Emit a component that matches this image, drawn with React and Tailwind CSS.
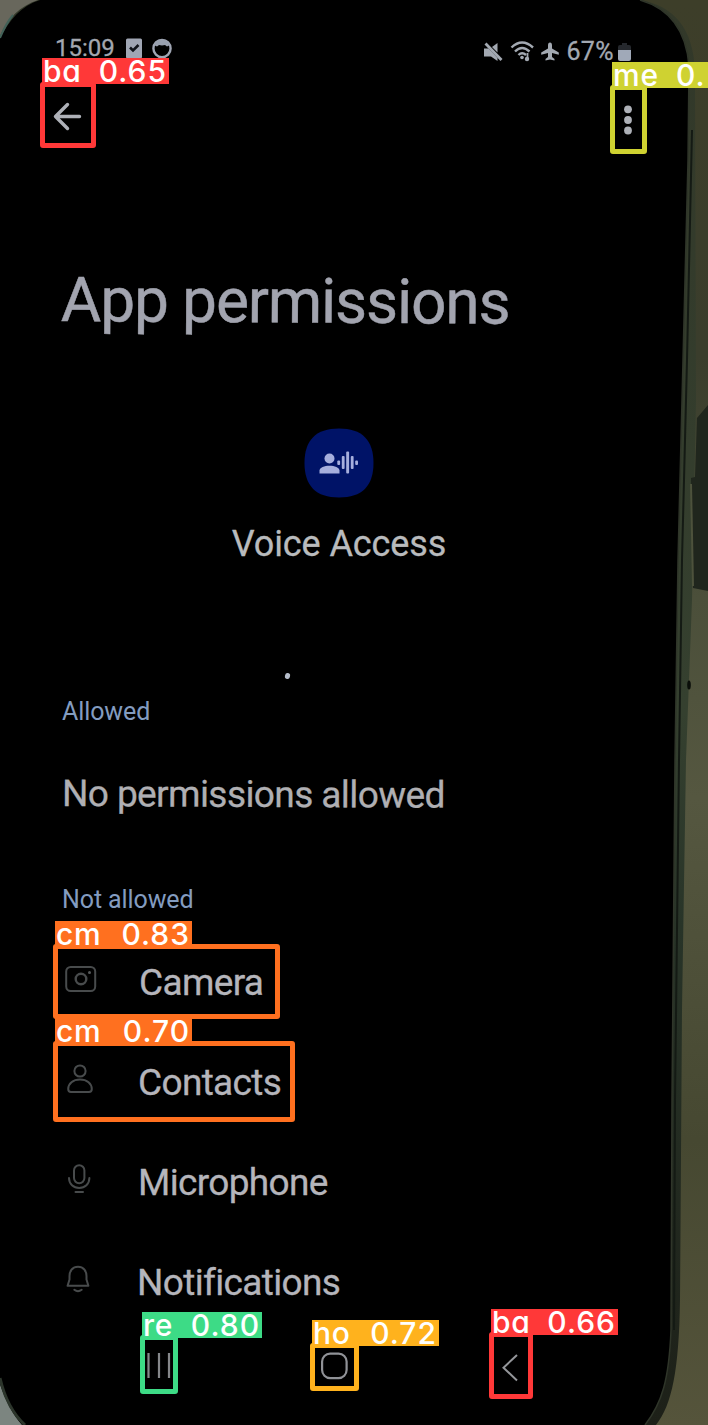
import React from "react";

function PhoneBody() {
  return (
    <svg className="absolute inset-0" width="708" height="1425" viewBox="0 0 708 1425" aria-hidden="true">
      <defs>
        <linearGradient id="desk" x1="0" y1="0" x2="0" y2="1">
          <stop offset="0" stopColor="#3d3e29" />
          <stop offset="0.25" stopColor="#3a3d2c" />
          <stop offset="0.42" stopColor="#4b4f3a" />
          <stop offset="0.56" stopColor="#555740" />
          <stop offset="0.8" stopColor="#464831" />
          <stop offset="1" stopColor="#55543b" />
        </linearGradient>
        <linearGradient id="side" x1="0" y1="0" x2="0" y2="1">
          <stop offset="0" stopColor="#323829" />
          <stop offset="0.5" stopColor="#35402f" />
          <stop offset="0.65" stopColor="#283428" />
          <stop offset="1" stopColor="#1d2018" />
        </linearGradient>
      </defs>
      <rect width="708" height="1425" fill="url(#desk)" />
      <path d="M0 0H60V60H0Z" fill="#68675c" />
      <path d="M0 1340H40V1425H0Z" fill="#7c8580" />
      <path
        d="M0 36C8 18 20 6 38 0H640C674 6 693 28 695 70L696 400L692 600L686 760L682 1010L680 1300C679 1370 672 1405 656 1425H26C14 1414 5 1400 0 1380Z"
        fill="url(#side)"
      />
      <path d="M708 405L697 418L695 477L691 478L693 588L708 591Z" fill="#20261d" />
      <path d="M691 484L693 586" stroke="#4d523c" strokeWidth="2" />
      <path
        d="M-2 42C8 22 20 6 40 0H640C668 8 686 28 689 66L688 160L683 360L678 560L675 760L672 1100L671 1330C669 1380 662 1403 645 1425H22C12 1414 4 1398 -2 1378Z"
        fill="#000"
      />
      <path
        d="M640 0C668 8 686 28 689 66L688 160L683 360L678 560L675 760L672 1100L671 1330C669 1380 662 1403 645 1425"
        fill="none"
        stroke="#2f3529"
        strokeWidth="1.5"
      />
      <path d="M692 130L687 360L682 560L679 760L675 1100L674 1330" fill="none" stroke="#141a14" strokeWidth="2" />
      <path d="M0 1378C5 1400 13 1414 25 1425" fill="none" stroke="#2c352b" strokeWidth="3" />
      <path d="M0 38C4 28 8 21 13 15" fill="none" stroke="#426158" strokeWidth="2" />
      <ellipse cx="689" cy="685" rx="1.8" ry="4.5" fill="#0a0e09" />
    </svg>
  );
}

const detections = [
  { name: "ba", score: "0.65", label: "left-[42px] top-[58px] w-[127px] bg-[#ff3838]", box: "left-[40px] top-[82px] w-[56px] h-[66px] border-[#ff3838]" },
  { name: "me", score: "0.", label: "left-[612px] top-[62px] w-[96px] bg-[#cfd231]", box: "left-[610px] top-[85px] w-[37px] h-[69px] border-[#cfd231]" },
  { name: "cm", score: "0.83", label: "left-[55px] top-[921px] w-[137px] bg-[#ff701f]", box: "left-[53px] top-[944px] w-[227px] h-[75px] border-[#ff701f]" },
  { name: "cm", score: "0.70", label: "left-[55px] top-[1018px] w-[137px] bg-[#ff701f]", box: "left-[53px] top-[1041px] w-[242px] h-[81px] border-[#ff701f]" },
  { name: "re", score: "0.80", label: "left-[142px] top-[1312px] w-[120px] bg-[#3ddb86]", box: "left-[140px] top-[1335px] w-[38px] h-[59px] border-[#3ddb86]" },
  { name: "ho", score: "0.72", label: "left-[312px] top-[1320px] w-[127px] bg-[#ffb21d]", box: "left-[310px] top-[1343px] w-[49px] h-[48px] border-[#ffb21d]" },
  { name: "ba", score: "0.66", label: "left-[491px] top-[1309px] w-[127px] bg-[#ff3838]", box: "left-[489px] top-[1332px] w-[44px] h-[67px] border-[#ff3838]" },
];

function Detection({ name, score, label, box }) {
  const cut = score === "0.";
  return (
    <>
      <div className={`absolute rounded-[3px] border-[5px] ${box}`} />
      <div
        className={`absolute flex h-[26px] items-center whitespace-nowrap pr-[2px] pl-px font-[Inter,sans-serif] text-[30px] leading-[26px] font-medium text-white [font-feature-settings:'cv11'] ${cut ? "gap-[17px]" : "justify-between"} ${label}`}
      >
        <span className="tracking-[0.8px]">{name}</span>
        <span className="tracking-[1px]">{score}</span>
      </div>
    </>
  );
}

function CameraIcon() {
  return (
    <svg width="34" height="34" viewBox="0 0 34 34" fill="none" stroke="#484b4c" strokeWidth="2">
      <rect x="2.2" y="5" width="29" height="24" rx="4.5" />
      <circle cx="17" cy="17" r="5.3" strokeWidth="2.4" />
      <circle cx="25.5" cy="10.5" r="1.5" fill="#555859" stroke="none" />
    </svg>
  );
}

function ContactIcon() {
  return (
    <svg width="34" height="34" viewBox="0 0 34 34" fill="none" stroke="#484b4c" strokeWidth="2">
      <circle cx="17" cy="9" r="5.6" />
      <path d="M5.2 27C5.2 21.5 10 17.5 17 17.5S28.8 21.5 28.8 27Q28.8 30 26 30H8Q5.2 30 5.2 27Z" />
    </svg>
  );
}

function MicIcon() {
  return (
    <svg width="34" height="34" viewBox="0 0 34 34" fill="none" stroke="#484b4c" strokeWidth="2" strokeLinecap="round">
      <rect x="12" y="3.2" width="10.4" height="18" rx="5.2" />
      <path d="M7 16C7 22 11.5 26 17.2 26S27.4 22 27.4 16M13.5 30H21" />
    </svg>
  );
}

function BellIcon() {
  return (
    <svg width="34" height="34" viewBox="0 0 34 34" fill="none" stroke="#484b4c" strokeWidth="2" strokeLinecap="round" strokeLinejoin="round">
      <path d="M17 4.8C11.5 4.8 8.5 9 8.5 14V17.5L6.6 23.8H27.4L25.5 17.5V14C25.5 9 22.5 4.8 17 4.8Z" />
      <path d="M13.3 27.8Q17 30.5 20.7 27.8" />
    </svg>
  );
}

function PermissionRow({ icon, inset, gap, children }) {
  return (
    <li className={`flex h-[100px] items-center ${inset}`}>
      <span className="-mt-[8px] shrink-0">{icon}</span>
      <span className={`whitespace-nowrap text-[37px] leading-[40px] tracking-[-0.65px] text-[#b5b5bb] [-webkit-text-stroke:0.3px] ${gap}`}>{children}</span>
    </li>
  );
}

export default function App() {
  return (
    <div className="relative h-[1425px] w-[708px] overflow-hidden bg-black font-[Roboto,sans-serif]">
      <PhoneBody />
      <main className="relative flex h-full flex-col">
        <header className="flex h-[72px] items-start justify-between pl-[55px] pr-[76px]">
          <div className="flex items-center pt-9 text-[#a3a7af]">
            <span className="text-[24px] leading-[24px] [-webkit-text-stroke:0.3px]">15:09</span>
            <svg className="ml-[10px]" width="18" height="22" viewBox="0 0 18 22">
              <rect x="1" y="1.5" width="16" height="20" rx="1.5" fill="#a0a6b4" />
              <path d="M5 10.5L8 13.5L13.5 8" fill="none" stroke="#11141b" strokeWidth="2.6" />
            </svg>
            <svg className="ml-[8px]" width="22" height="22" viewBox="0 0 22 22">
              <circle cx="11" cy="11.5" r="8.6" fill="none" stroke="#a0a6b4" strokeWidth="2.4" />
              <path d="M3 8Q5 2.5 11 2.5T19 8L16 9.5L14 8L11 8.5L8 8L6 9.5Z" fill="#98a0ae" />
            </svg>
          </div>
          <div className="flex items-center pt-[39px] text-[#a3a9b2]">
            <svg width="22" height="22" viewBox="0 0 22 22" fill="currentColor">
              <path d="M1 7.5H5.5L9 11L14.5 17V20L8 15.5H1Z" />
              <path d="M9 6L14.5 2V11.5Z" />
              <path d="M2.5 2.5L18.5 19" stroke="currentColor" strokeWidth="2.8" />
            </svg>
            <svg className="ml-[5px]" width="26" height="23" viewBox="0 0 26 23" fill="none" stroke="currentColor" strokeWidth="2.4">
              <path d="M1.5 7.5Q12 -2.5 23 7.5M5 11.5Q12 4.5 19.5 11.5M8.5 15Q12 11.5 16 15" />
              <circle cx="12" cy="17.5" r="1.8" fill="currentColor" stroke="none" />
              <path d="M17.5 13V19" strokeWidth="1.8" />
              <circle cx="17" cy="19" r="2.2" fill="currentColor" stroke="none" />
            </svg>
            <svg className="ml-[4px]" width="20" height="21" viewBox="0 0 20 21" fill="currentColor">
              <path d="M10 1.5C11.4 1.5 12 2.8 12 4.5V7.5L18.8 11.5V13.8L12 12V16L14.5 18V19.6L10 18.6L5.5 19.6V18L8 16V12L1.2 13.8V11.5L8 7.5V4.5C8 2.8 8.6 1.5 10 1.5Z" />
            </svg>
            <span className="ml-[6px] text-[25px] leading-[25px] tracking-[0.4px] [-webkit-text-stroke:0.3px]">67%</span>
            <svg className="ml-[3px]" width="15" height="20" viewBox="0 0 15 20">
              <path d="M1 8V5Q1 3 3 3H5V1H10V3H12Q14 3 14 5V8Z" fill="#25282d" />
              <path d="M1 8H14V17Q14 19 12 19H3Q1 19 1 17Z" fill="#a0a9b8" />
            </svg>
          </div>
        </header>

        <div className="flex h-[90px] items-center justify-between pl-[53px] pr-[74px]">
          <svg width="30" height="30" viewBox="0 0 30 30" fill="none" stroke="#aeb1b8" strokeWidth="3.4" strokeLinecap="round" strokeLinejoin="round">
            <path d="M26.5 14.5H2.5M14.5 2.5L2.5 14.5L14.5 26.5" />
          </svg>
          <svg className="mt-[5px]" width="12" height="34" viewBox="0 0 12 34" fill="#aeb1b8">
            <circle cx="6" cy="6.3" r="3.9" />
            <circle cx="6" cy="17" r="3.9" />
            <circle cx="6" cy="27.5" r="3.9" />
          </svg>
        </div>

        <div className="flex h-[266px] items-center pt-[9px] pl-[61px]">
          <h1 className="origin-left rotate-[0.35deg] whitespace-nowrap text-[62px] leading-[70px] tracking-[-1.05px] text-[#a2a4af] [-webkit-text-stroke:0.5px]">App permissions</h1>
        </div>

        <section className="flex h-[250px] w-[678px] flex-col items-center">
          <svg className="shrink-0" width="70" height="70" viewBox="0 0 70 70">
            <path d="M35 .5C58 .5 69.5 12 69.5 35S58 69.5 35 69.5S.5 58 .5 35S12 .5 35 .5Z" fill="#001367" />
            <g fill="#a6afdd">
              <circle cx="25.5" cy="30.5" r="5" />
              <path d="M15.5 45.5V42.5C15.5 36 35.5 36 35.5 42.5V45.5Z" />
              <rect x="33.3" y="32.5" width="2.8" height="4.5" rx="1" />
              <rect x="37.8" y="28" width="2.8" height="13" rx="1" />
              <rect x="42.2" y="23.5" width="2.9" height="22" rx="1" />
              <rect x="46.8" y="28" width="2.8" height="13" rx="1" />
              <rect x="51.2" y="32.5" width="2.8" height="4.5" rx="1" />
            </g>
          </svg>
          <p className="mt-[26px] whitespace-nowrap text-[36px] leading-[40px] tracking-[-0.1px] text-[#b9bbbd] [-webkit-text-stroke:0.3px]">Voice Access</p>
          <span className="mt-[109px] mr-[103px] h-[6px] w-[5px] shrink-0 rotate-12 rounded-full bg-[#b6bdca]" />
        </section>

        <section className="flex flex-col pl-[62px]">
          <h2 className="mt-[19px] text-[25px] leading-[30px] tracking-[-0.1px] text-[#839cc0]">Allowed</h2>
          <p className="mt-[47px] origin-left rotate-[0.25deg] whitespace-nowrap text-[37px] leading-[40px] tracking-[-0.58px] text-[#afafb3] [-webkit-text-stroke:0.3px]">No permissions allowed</p>
          <h2 className="mt-[71px] text-[25px] leading-[30px] tracking-[-0.1px] text-[#839cc0]">Not allowed</h2>
        </section>

        <ul className="mt-[17.5px] flex flex-col">
          <PermissionRow icon={<CameraIcon />} inset="pl-[64px]" gap="ml-[41px]">Camera</PermissionRow>
          <PermissionRow icon={<ContactIcon />} inset="pl-[63px]" gap="ml-[41px]">Contacts</PermissionRow>
          <PermissionRow icon={<MicIcon />} inset="pl-[62px]" gap="ml-[42px]">Microphone</PermissionRow>
          <PermissionRow icon={<BellIcon />} inset="pl-[61px]" gap="ml-[42px]">Notifications</PermissionRow>
        </ul>

        <nav className="flex items-start pt-[19.5px] pl-[145px]">
          <svg width="28" height="28" viewBox="0 0 28 28" stroke="#85878a" strokeWidth="2.2">
            <path d="M3.5 1V26M14 1V26M24 1V26" />
          </svg>
          <svg className="ml-[148px]" width="28" height="28" viewBox="0 0 28 28" fill="none" stroke="#909297" strokeWidth="2.2">
            <rect x="1.1" y="1.6" width="24.5" height="24.5" rx="8" />
          </svg>
          <svg className="mt-[2px] ml-[151px]" width="20" height="28" viewBox="0 0 20 28" fill="none" stroke="#94969a" strokeWidth="2">
            <path d="M17 1L3.5 13.7L17 26.4" />
          </svg>
        </nav>
      </main>
      {detections.map((d, i) => (
        <Detection key={i} {...d} />
      ))}
    </div>
  );
}
